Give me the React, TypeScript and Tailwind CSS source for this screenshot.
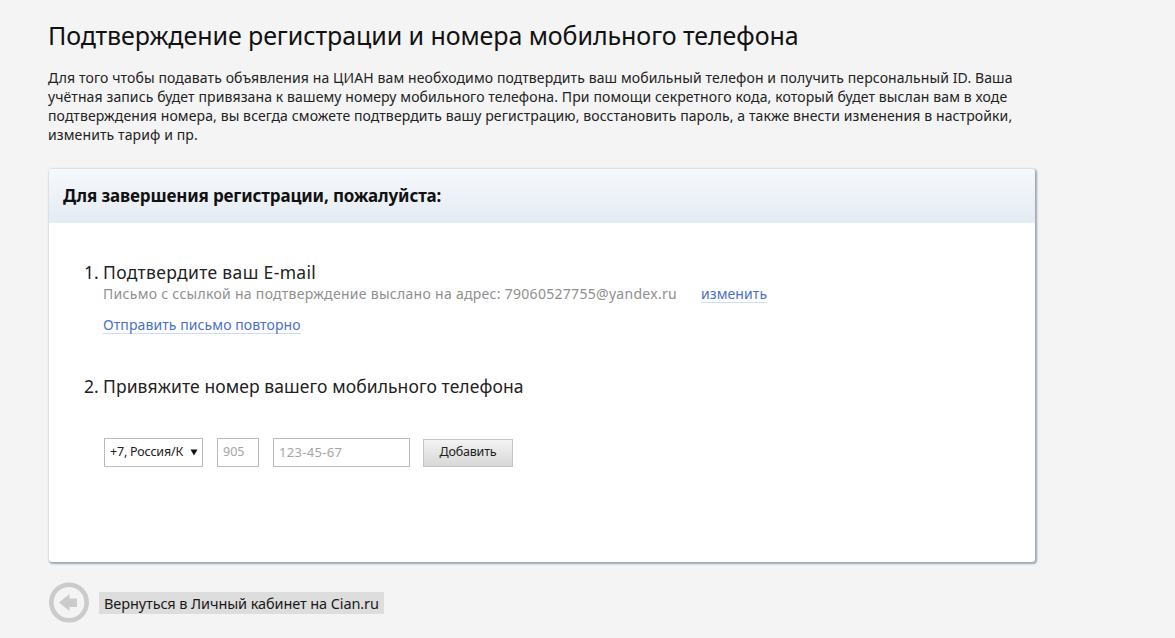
import React from "react";

export default function App() {
  return (
    <div className="min-h-[638px] w-full overflow-hidden bg-[#f4f4f4] pl-12 font-['Noto_Sans',sans-serif] text-[#1a1a1a]">
      <div className="w-[988px]">
        <h1 className="pt-[17px] text-[25px] leading-[36px] font-normal tracking-[-0.07px] whitespace-nowrap text-[#111]">
          Подтверждение регистрации и номера мобильного телефона
        </h1>
        <p className="mt-[15px] text-[14px] leading-[19px] tracking-[0.11px] text-[#222] whitespace-nowrap">
          Для того чтобы подавать объявления на ЦИАН вам необходимо подтвердить ваш мобильный телефон и получить персональный ID. Ваша
          <br />
          учётная запись будет привязана к вашему номеру мобильного телефона. При помощи секретного кода, который будет выслан вам в ходе
          <br />
          подтверждения номера, вы всегда сможете подтвердить вашу регистрацию, восстановить пароль, а также внести изменения в настройки,
          <br />
          изменить тариф и пр.
        </p>

        <div className="mx-[1px] mt-[25px] h-[393px] overflow-hidden rounded-[3px] bg-white shadow-[1px_1px_2px_1px_rgba(100,115,140,0.6)]">
          <div className="flex h-[54px] items-center bg-gradient-to-b from-[#f6f9fc] to-[#e4ebf3] pl-[14px]">
            <h2 className="text-[17px] font-bold tracking-[-0.15px] text-[#111]">Для завершения регистрации, пожалуйста:</h2>
          </div>
          <div className="pl-[34px]">
            <div className="mt-[37px] flex text-[17.5px] leading-[24px] text-[#222]">
              <span className="w-[20px] pl-[1px]">1.</span>
              <span className="tracking-[0.35px]">Подтвердите ваш E-mail</span>
            </div>
            <div className="flex items-baseline pl-[20px] text-[14px] leading-[20px] text-[#8f8f8f]">
              <span className="w-[598px] tracking-[0.29px] whitespace-nowrap">Письмо с ссылкой на подтверждение выслано на адрес: 79060527755@yandex.ru</span>
              <a className="border-b border-[#cfdcf5] leading-[17px] tracking-[0.09px] text-[#4a6fc9]">изменить</a>
            </div>
            <div className="mt-[12px] flex pl-[20px] text-[14px] tracking-[0.09px]">
              <a className="border-b border-[#cfdcf5] leading-[17px] text-[#4a6fc9]">Отправить письмо повторно</a>
            </div>
            <div className="mt-[40px] flex text-[17.5px] leading-[24px] text-[#222]">
              <span className="w-[20px] pl-[1px]">2.</span>
              <span className="tracking-[0.08px]">Привяжите номер вашего мобильного телефона</span>
            </div>
            <div className="mt-[40px] flex items-center pl-[21px] text-[12.5px]">
              <div className="flex h-[29px] w-[99px] items-center justify-between border border-[#bcbcbc] pr-[4px] pl-[5px] text-[#222] tracking-[-0.2px]">
                <span>+7, Россия/К</span>
                <svg width="8" height="7" viewBox="0 0 8 7"><path d="M0.5 0.5h7L4 6.5z" fill="#111" /></svg>
              </div>
              <div className="ml-[14px] flex h-[29px] w-[42px] items-center border border-[#bcbcbc] pl-[5px] text-[#a5a5a5]">905</div>
              <div className="ml-[14px] flex h-[29px] w-[137px] items-center border border-[#bcbcbc] pl-[5px] text-[13px] tracking-[0.3px] text-[#a5a5a5]">123-45-67</div>
              <button className="ml-[13px] h-[28px] w-[90px] border border-[#c4c4c4] bg-gradient-to-b from-[#f3f3f3] to-[#d8d8d8] text-[#222] tracking-[-0.2px]">Добавить</button>
            </div>
          </div>
        </div>

        <div className="mt-[20px] flex items-center">
          <svg width="41" height="41" viewBox="0 0 41 41" className="shrink-0">
            <circle cx="21" cy="20.5" r="17.7" fill="none" stroke="#cbcbcb" strokeWidth="4.6" />
            <path d="M11 20.5 L21.5 12 V16.5 H29 V25 H21.5 V29 Z" fill="#cbcbcb" />
          </svg>
          <span className="ml-[10px] bg-[#dddddd] px-[5px] text-[14.5px] leading-[22px] tracking-[-0.1px] text-[#1a1a1a]">Вернуться в Личный кабинет на Cian.ru</span>
        </div>
      </div>
    </div>
  );
}
